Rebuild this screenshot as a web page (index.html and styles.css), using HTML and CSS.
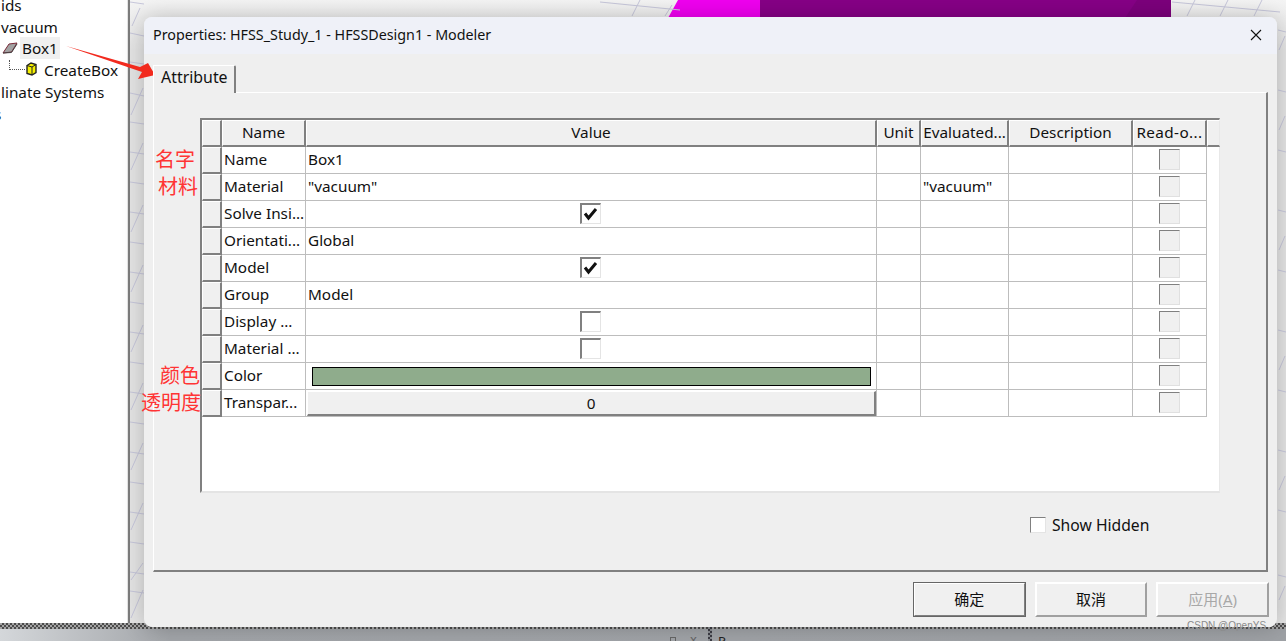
FILE: index.html
```html
<!DOCTYPE html>
<html lang="en">
<head>
<meta charset="utf-8">
<title>Properties</title>
<link rel="stylesheet" href="styles.css">
</head>
<body>
<div class="app">
  <div class="main">
    <aside class="tree">
      <div class="tree-row tree-l0">ids</div>
      <div class="tree-row tree-l0">vacuum</div>
      <div class="tree-row tree-box">
        <svg class="icon-box" width="16" height="12" viewBox="0 0 16 12"><path d="M1 11 L7 2 L15 1 L9.5 10 Z" fill="#a2a2a2" stroke="#7a2a38" stroke-width="1"/><path d="M1 11 L9.5 10.5 L15 2" fill="none" stroke="#444" stroke-width="1"/></svg>
        <span class="tree-sel">Box1</span>
      </div>
      <div class="tree-row tree-create">
        <span class="tree-dots"></span>
        <svg class="icon-create" width="11" height="14" viewBox="0 0 11 14"><path d="M1 3.5 L5 1 L10 2.5 L10 10.5 L6 13 L1 11.5 Z" fill="#f5f000" stroke="#222" stroke-width="1.4"/><path d="M1 3.5 L6 5 L10 2.5 M6 5 L6 13" fill="none" stroke="#222" stroke-width="1"/></svg>
        <span>CreateBox</span>
      </div>
      <div class="tree-row tree-l0">linate Systems</div>
      <div class="tree-row tree-l0 tree-cut">s</div>
    </aside>
    <div class="canvas">
      <svg class="canvas-art" width="1156" height="623" viewBox="130 0 1156 623">
        <path d="M668 18 L678 0 L760 0 L760 18 Z" fill="#f000f0"/>
        <path d="M760 0 H1171 V18 H760 Z" fill="#860086"/>
        <path d="M1125 18 L1137 0 H1171 V18 Z" fill="#7c007c"/>
        <path class="mesh" d="M130 2 L144 4 M130 33 L144 36 M130 62 L144 64 M130 93 L144 96 M130 122 L144 124 M130 152 L144 154 M130 182 L144 184 M130 212 L144 214 M130 242 L144 244 M130 272 L144 274 M130 302 L144 304 M130 332 L144 334 M130 362 L144 364 M130 392 L144 394 M130 422 L144 424 M130 452 L144 454 M130 482 L144 484 M130 512 L144 514 M130 542 L144 544 M130 572 L144 574 M130 591 L144 593 M132 26 L140 8 M131 115 L143 88 M131 170 L143 143 M131 232 L143 205 M131 292 L143 265 M131 352 L143 325 M131 410 L143 383 M131 470 L143 443 M131 530 L143 503 M131 580 L143 563 M131 618 L143 590"/>
        <path class="mesh" d="M600 2 L680 10 M640 0 L632 16 M672 5 L665 16 M1172 2 L1280 12 M1195 0 L1187 16 M1228 0 L1220 16 M1262 0 L1254 16 M1278 30 L1286 32 M1278 90 L1286 92 M1278 150 L1286 152 M1278 210 L1286 212 M1278 270 L1286 272 M1278 330 L1286 332 M1278 390 L1286 392 M1278 450 L1286 452 M1278 510 L1286 512 M1278 575 L1286 577 M1279 50 L1285 36 M1279 130 L1285 116 M1279 250 L1285 236 M1279 370 L1285 356 M1279 490 L1285 476 M1279 600 L1285 586"/>
      </svg>
    </div>
  </div>
  <footer class="statusbar">
    <span class="status-frag status-box"></span>
    <span class="status-frag status-x">x</span>
    <span class="status-frag status-bar"></span>
    <span class="status-frag status-p">P</span>
  </footer>
</div>

<section class="dialog">
  <header class="titlebar">
    <span>Properties: HFSS_Study_1 - HFSSDesign1 - Modeler</span>
    <svg class="close" width="12" height="12" viewBox="0 0 12 12"><path d="M1 1 L11 11 M11 1 L1 11" stroke="#111" stroke-width="1.1" fill="none"/></svg>
  </header>
  <div class="dialog-body">
    <div class="tabstrip"><div class="tab">Attribute</div></div>
    <div class="panel">
      <div class="grid">
        <div class="row head">
          <div class="h"></div><div class="h">Name</div><div class="h">Value</div><div class="h">Unit</div><div class="h">Evaluated...</div><div class="h">Description</div><div class="h h-ro">Read-o...</div><div class="h"></div>
        </div>
        <div class="row"><div class="rh"></div><div class="c">Name</div><div class="c">Box1</div><div class="c"></div><div class="c"></div><div class="c"></div><div class="c cc"><span class="ro"></span></div></div>
        <div class="row"><div class="rh"></div><div class="c">Material</div><div class="c">"vacuum"</div><div class="c"></div><div class="c">"vacuum"</div><div class="c"></div><div class="c cc"><span class="ro"></span></div></div>
        <div class="row"><div class="rh"></div><div class="c">Solve Insi...</div><div class="c cc cv"><span class="chk"><svg width="15" height="14" viewBox="0 0 15 14"><path d="M2 6.5 L5.5 11 L13 2" fill="none" stroke="#111" stroke-width="3"/></svg></span></div><div class="c"></div><div class="c"></div><div class="c"></div><div class="c cc"><span class="ro"></span></div></div>
        <div class="row"><div class="rh"></div><div class="c">Orientati...</div><div class="c">Global</div><div class="c"></div><div class="c"></div><div class="c"></div><div class="c cc"><span class="ro"></span></div></div>
        <div class="row"><div class="rh"></div><div class="c">Model</div><div class="c cc cv"><span class="chk"><svg width="15" height="14" viewBox="0 0 15 14"><path d="M2 6.5 L5.5 11 L13 2" fill="none" stroke="#111" stroke-width="3"/></svg></span></div><div class="c"></div><div class="c"></div><div class="c"></div><div class="c cc"><span class="ro"></span></div></div>
        <div class="row"><div class="rh"></div><div class="c">Group</div><div class="c">Model</div><div class="c"></div><div class="c"></div><div class="c"></div><div class="c cc"><span class="ro"></span></div></div>
        <div class="row"><div class="rh"></div><div class="c">Display ...</div><div class="c cc cv"><span class="chk"></span></div><div class="c"></div><div class="c"></div><div class="c"></div><div class="c cc"><span class="ro"></span></div></div>
        <div class="row"><div class="rh"></div><div class="c">Material ...</div><div class="c cc cv"><span class="chk"></span></div><div class="c"></div><div class="c"></div><div class="c"></div><div class="c cc"><span class="ro"></span></div></div>
        <div class="row"><div class="rh"></div><div class="c">Color</div><div class="c swatch-cell"><span class="swatch"></span></div><div class="c"></div><div class="c"></div><div class="c"></div><div class="c cc"><span class="ro"></span></div></div>
        <div class="row"><div class="rh"></div><div class="c">Transpar...</div><div class="c btn-cell"><span class="cell-btn">0</span></div><div class="c"></div><div class="c"></div><div class="c"></div><div class="c cc"><span class="ro"></span></div></div>
      </div>
      <label class="show-hidden"><span class="sh-box"></span>Show Hidden</label>
    </div>
    <div class="actions">
      <button class="btn btn-default">确定</button>
      <button class="btn">取消</button>
      <button class="btn btn-disabled">应用(<u>A</u>)</button>
    </div>
  </div>
</section>

<svg class="arrow" width="95" height="40" viewBox="0 0 95 40"><path d="M0 2 L74 23 L82 19 L89 31 L72 35 L76 28 Z" fill="#f22a1e"/></svg>
<div class="note note-name">名字</div>
<div class="note note-mat">材料</div>
<div class="note note-color">颜色</div>
<div class="note note-trans">透明度</div>
<div class="watermark">CSDN @OpenYS</div>
</body>
</html>
```
FILE: styles.css
```css
* { box-sizing: border-box; }
html, body { margin: 0; height: 100%; overflow: hidden; }
body { position: relative; width: 1286px; height: 641px; font-family: "Noto Sans", "Noto Sans CJK SC", sans-serif; font-size: 15.3px; color: #111; background: #fff; }

.app { display: flex; flex-direction: column; height: 641px; }
.main { display: flex; height: 623px; }

.tree { width: 128px; background: #fff; overflow: hidden; display: flex; flex-direction: column; border-right: 1px solid #e4e4e4; }
.tree-row { height: 22px; line-height: 22px; white-space: nowrap; flex: none; display: flex; align-items: center; }
.tree-row:first-child { margin-top: -6px; }
.tree-box { margin-top: -1px; }
.tree-l0 { padding-left: 1px; }
.tree-cut { margin-left: -7px; }
.tree-box { padding-left: 2px; }
.icon-box { flex: none; }
.tree-sel { background: #f0f0f0; margin-left: 2px; padding: 0 2px; height: 22px; line-height: 22px; width: 40px; }
.tree-create { padding-left: 9px; }
.tree-dots { width: 16px; height: 10px; border-left: 1px dotted #555; border-bottom: 1px dotted #555; margin-top: -10px; flex: none; }
.icon-create { margin: -2px 0 0 1px; flex: none; }
.tree-create span:last-child { margin-left: 7px; }

.canvas { flex: 1; position: relative; border-left: 2px solid #7c7c7c; background: linear-gradient(#f4f4f4, #e4e4e4 8%); }
.canvas-art { display: block; }
.mesh { fill: none; stroke: #c6c6da; stroke-width: 1; }

.statusbar { height: 18px; position: relative; overflow: hidden; background: linear-gradient(90deg, #d4d7da, #a2a5a9 170px, #9ea1a5); }
.statusbar::before { content: ""; display: block; height: 6px; background: repeating-conic-gradient(#4c4c4c 0 25%, #a4a4a4 0 50%) 0 0 / 4px 4px; }
.status-frag { position: absolute; }
.status-box { left: 670px; top: 14px; width: 6px; height: 6px; border: 1px solid #666; }
.status-x { left: 690px; top: 9px; font-size: 13px; line-height: 15px; color: #666; }
.status-bar { left: 708px; top: 0; width: 4px; height: 18px; background: repeating-conic-gradient(#3c3c44 0 25%, #8a8d92 0 50%) 0 0 / 4px 4px; }
.status-p { left: 718px; top: 11px; font-size: 13px; line-height: 15px; color: #222; }

.dialog { position: absolute; left: 144px; top: 17px; width: 1133px; height: 610px; border-radius: 8px; background: #efefef; box-shadow: 0 0 22px rgba(0, 0, 0, .22); display: flex; flex-direction: column; overflow: hidden; }
.titlebar { height: 37px; flex: none; background: #eff1f8; display: flex; align-items: center; justify-content: space-between; padding: 0 15px 2px 9px; font-size: 14.3px; }
.close { flex: none; }
.dialog-body { flex: 1; padding: 11px 8px 0 9px; display: flex; flex-direction: column; }

.tabstrip { height: 27px; flex: none; display: flex; position: relative; z-index: 1; }
.tab { width: 83px; height: 28px; background: #efefef; border-top: 1px solid #fff; border-left: 1px solid #fff; border-right: 2px solid #808080; line-height: 23px; padding-left: 7px; border-top-right-radius: 2px; font-size: 15.9px; }

.panel { height: 480px; width: 1115px; flex: none; border: 1px solid #fff; border-right: 2px solid #808080; border-bottom: 2px solid #808080; padding: 25px 0 0 46px; }

.grid { width: 1020px; height: 375px; background: #fff; border-top: 2px solid #808080; border-left: 2px solid #808080; border-right: 1px solid #e8e8e8; border-bottom: 2px solid #e4e4e4; }
.row { display: grid; grid-template-columns: 20px 84px 571px 44px 88px 124px 74px 13px; height: 27px; }
.head { height: 27px; }
.h { background: #f0f0f0; border-top: 1px solid #fff; border-left: 1px solid #fff; border-right: 2px solid #808080; border-bottom: 2px solid #808080; text-align: center; line-height: 23px; white-space: nowrap; overflow: hidden; }
.h:last-child { border-right: 1px solid #e8e8e8; }
.h-ro { letter-spacing: .4px; }
.rh { background: #f0f0f0; border-top: 1px solid #fff; border-left: 1px solid #fff; border-right: 2px solid #808080; border-bottom: 2px solid #808080; }
.c { border-right: 1px solid #bdbdbd; border-bottom: 1px solid #bdbdbd; padding-left: 2px; line-height: 24px; white-space: nowrap; overflow: hidden; }
.cc { display: flex; justify-content: center; align-items: center; padding: 0; }
.cv { padding-right: 2px; }

.ro { width: 21px; height: 21px; margin-top: -2px; background: #f0f0f0; border-top: 1px solid #808080; border-left: 1px solid #808080; border-right: 1px solid #e0e0e0; border-bottom: 1px solid #e0e0e0; }
.chk { width: 21px; height: 21px; margin-top: -1px; background: #fff; border-top: 2px solid #808080; border-left: 2px solid #808080; border-right: 1px solid #e4e4e4; border-bottom: 1px solid #e4e4e4; display: flex; align-items: center; justify-content: center; }

.swatch-cell { display: flex; align-items: center; padding-left: 6px; }
.swatch { width: 559px; height: 19px; background: #8fac8c; border: 1px solid #000; }
.btn-cell { padding: 1px 0 0 1px; }
.cell-btn { display: block; width: 569px; height: 25px; background: #f0f0f0; border-top: 1px solid #fff; border-left: 1px solid #fff; border-right: 2px solid #808080; border-bottom: 2px solid #808080; text-align: center; line-height: 22px; }

.show-hidden { display: flex; align-items: center; margin: 23px 0 0 830px; height: 18px; font-size: 15.7px; }
.sh-box { width: 16px; height: 16px; background: #fff; border-top: 1px solid #808080; border-left: 1px solid #808080; border-right: 1px solid #e4e4e4; border-bottom: 1px solid #e4e4e4; margin-right: 6px; }

.actions { display: flex; gap: 9px; margin: 10px 0 0 760px; }
.btn { width: 113px; height: 35px; padding: 0 0 3px; font: inherit; font-size: 15px; color: #111; background: #f0f0f0; border: 2px solid #fff; border-right-color: #a0a0a0; border-bottom-color: #a0a0a0; }
.btn-default { outline: 1px solid #666; outline-offset: -1px; border-right-color: #808080; border-bottom-color: #808080; }
.btn-disabled { color: #a8a8a8; }

.arrow { position: absolute; left: 66px; top: 44px; }
.note { position: absolute; color: #ff3434; font-size: 20px; line-height: 26px; font-family: "Noto Sans CJK SC", sans-serif; }
.note-name { left: 155px; top: 146px; }
.note-mat { left: 158px; top: 173px; }
.note-color { left: 160px; top: 362px; }
.note-trans { left: 141px; top: 389px; }
.watermark { position: absolute; left: 1187px; top: 619px; font-size: 10px; line-height: 14px; color: #8a8a8a; font-family: "Liberation Sans", sans-serif; white-space: nowrap; }
```
